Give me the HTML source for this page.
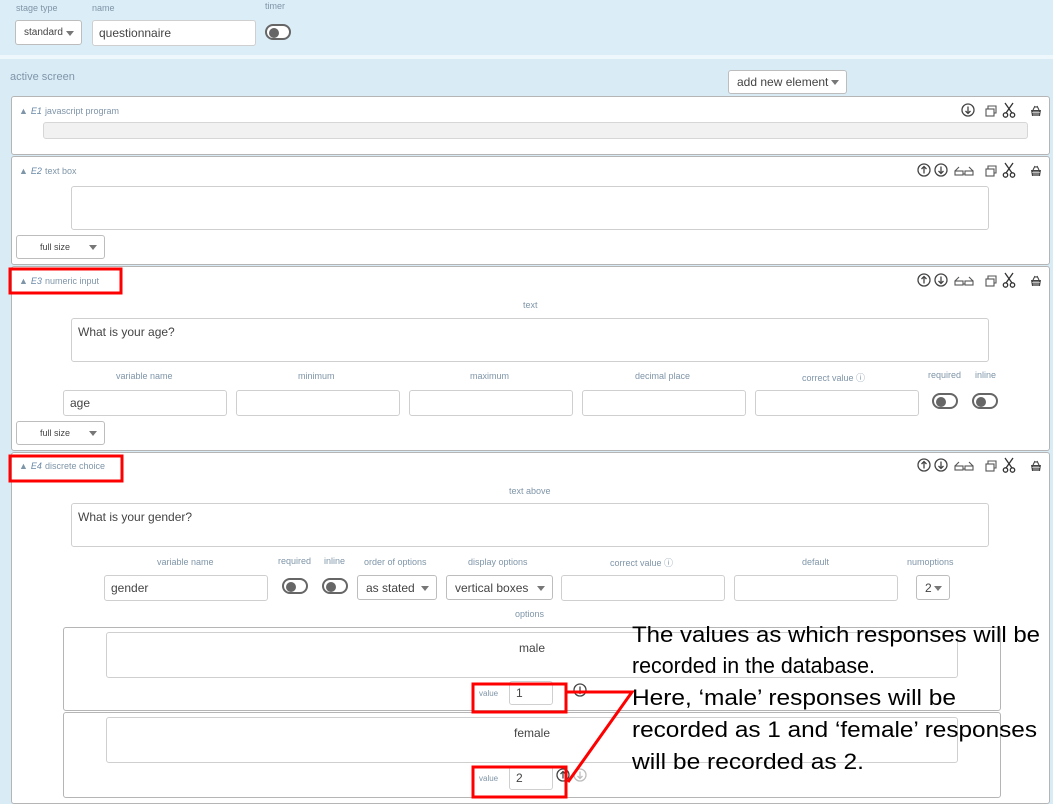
<!DOCTYPE html>
<html><head><meta charset="utf-8">
<style>
*{box-sizing:border-box;margin:0;padding:0}
body{width:1053px;height:802px;overflow:hidden;background:#d9ecf6;font-family:"Liberation Sans",sans-serif;position:relative}
.a{position:absolute}
.lbl{position:absolute;font-size:9px;color:#7f95a8;white-space:nowrap}
.panel{position:absolute;left:11px;width:1039px;background:#fff;border:1px solid #b5b5b5;border-radius:3px}
.inp{position:absolute;background:#fff;border:1px solid #cfcfcf;border-radius:3px;font-size:12px;color:#444;padding:0 6px;display:flex;align-items:center}
.ta{position:absolute;background:#fff;border:1px solid #cfcfcf;border-radius:3px;font-size:12px;color:#444;padding:6px}
.sel{position:absolute;background:#fff;border:1px solid #bdbdbd;border-radius:3px;font-size:12px;color:#444;display:flex;align-items:center;padding-left:8px}
.sel:after{content:"";position:absolute;right:7px;top:50%;margin-top:-2px;border-left:4px solid transparent;border-right:4px solid transparent;border-top:5px solid #777}
.tog{position:absolute;width:26px;height:16px;border:2px solid #666;border-radius:8px;background:#fff}
.tog:after{content:"";position:absolute;left:2px;top:1.5px;width:10px;height:10px;border-radius:50%;background:#666}
.head{position:absolute;font-size:9px;color:#7f95a8;white-space:nowrap}
.head i{color:#6a89a8;margin:0 3px 0 3px}
</style></head><body>
<div class="a" style="left:0;top:0;width:1053px;height:55px;background:#dbedf6"></div>
<div class="a" style="left:0;top:55px;width:1053px;height:4px;background:#eef7fb"></div>
<div class="lbl" style="left:16px;top:3px">stage type</div>
<div class="lbl" style="left:92px;top:3px">name</div>
<div class="lbl" style="left:265px;top:1px">timer</div>
<div class="sel" style="left:15px;top:20px;width:67px;height:25px;font-size:10px;padding-left:8px">standard</div>
<div class="inp" style="left:92px;top:20px;width:164px;height:26px;font-size:12px">questionnaire</div>
<div class="tog" style="left:265px;top:24px"></div>
<div class="lbl" style="left:10px;top:71px;font-size:11px;color:#7f95a8">active screen</div>
<div class="sel" style="left:728px;top:70px;width:119px;height:24px;font-size:12px">add new element</div>

<div class="panel" style="top:96px;height:59px"></div>
<div class="head" style="left:19px;top:106px">&#9650;<i>E1</i>javascript program</div>
<div class="a" style="left:43px;top:122px;width:985px;height:17px;background:#f1f1f1;border:1px solid #d6d6d6;border-radius:3px"></div>

<div class="panel" style="top:156px;height:109px"></div>
<div class="head" style="left:19px;top:166px">&#9650;<i>E2</i>text box</div>
<div class="ta" style="left:71px;top:186px;width:918px;height:44px"></div>
<div class="sel" style="left:16px;top:235px;width:89px;height:24px;font-size:9px;padding-left:23px">full size</div>

<div class="panel" style="top:266px;height:185px"></div>
<div class="head" style="left:19px;top:276px">&#9650;<i>E3</i>numeric input</div>
<div class="lbl" style="left:523px;top:300px">text</div>
<div class="ta" style="left:71px;top:318px;width:918px;height:44px">What is your age?</div>
<div class="lbl" style="left:116px;top:371px">variable name</div>
<div class="lbl" style="left:298px;top:371px">minimum</div>
<div class="lbl" style="left:470px;top:371px">maximum</div>
<div class="lbl" style="left:635px;top:371px">decimal place</div>
<div class="lbl" style="left:802px;top:371px">correct value &#9432;</div>
<div class="lbl" style="left:928px;top:370px">required</div>
<div class="lbl" style="left:975px;top:370px">inline</div>
<div class="inp" style="left:63px;top:390px;width:164px;height:26px">age</div>
<div class="inp" style="left:236px;top:390px;width:164px;height:26px"></div>
<div class="inp" style="left:409px;top:390px;width:164px;height:26px"></div>
<div class="inp" style="left:582px;top:390px;width:164px;height:26px"></div>
<div class="inp" style="left:755px;top:390px;width:164px;height:26px"></div>
<div class="tog" style="left:932px;top:393px"></div>
<div class="tog" style="left:972px;top:393px"></div>
<div class="sel" style="left:16px;top:421px;width:89px;height:24px;font-size:9px;padding-left:23px">full size</div>

<div class="panel" style="top:452px;height:352px"></div>
<div class="head" style="left:19px;top:461px">&#9650;<i>E4</i>discrete choice</div>
<div class="lbl" style="left:509px;top:486px">text above</div>
<div class="ta" style="left:71px;top:503px;width:918px;height:44px">What is your gender?</div>
<div class="lbl" style="left:157px;top:557px">variable name</div>
<div class="lbl" style="left:278px;top:556px">required</div>
<div class="lbl" style="left:324px;top:556px">inline</div>
<div class="lbl" style="left:364px;top:557px">order of options</div>
<div class="lbl" style="left:468px;top:557px">display options</div>
<div class="lbl" style="left:610px;top:556px">correct value &#9432;</div>
<div class="lbl" style="left:802px;top:557px">default</div>
<div class="lbl" style="left:907px;top:557px">numoptions</div>
<div class="inp" style="left:104px;top:575px;width:164px;height:26px">gender</div>
<div class="tog" style="left:282px;top:578px"></div>
<div class="tog" style="left:322px;top:578px"></div>
<div class="sel" style="left:357px;top:575px;width:80px;height:25px">as stated</div>
<div class="sel" style="left:446px;top:575px;width:107px;height:25px">vertical boxes</div>
<div class="inp" style="left:561px;top:575px;width:164px;height:26px"></div>
<div class="inp" style="left:734px;top:575px;width:164px;height:26px"></div>
<div class="sel" style="left:916px;top:575px;width:34px;height:25px">2</div>
<div class="lbl" style="left:515px;top:609px">options</div>

<div class="a" style="left:63px;top:627px;width:938px;height:84px;border:1px solid #b5b5b5;border-radius:3px"></div>
<div class="ta" style="left:106px;top:632px;width:852px;height:46px;text-align:center;padding-top:8px">male</div>
<div class="lbl" style="left:479px;top:689px;font-size:8px">value</div>
<div class="inp" style="left:509px;top:681px;width:44px;height:24px">1</div>
<div class="a" style="left:63px;top:712px;width:938px;height:86px;border:1px solid #b5b5b5;border-radius:3px"></div>
<div class="ta" style="left:106px;top:717px;width:852px;height:46px;text-align:center;padding-top:8px">female</div>
<div class="lbl" style="left:479px;top:774px;font-size:8px">value</div>
<div class="inp" style="left:509px;top:766px;width:44px;height:24px">2</div>

<svg class="a" style="left:0;top:0" width="1053" height="802">
<defs>
<g id="up"><circle cx="0" cy="0" r="6" fill="none" stroke="#444" stroke-width="1.3"/><path d="M0 3.5V-3.5M-2.5 -1L0 -3.5L2.5 -1" fill="none" stroke="#444" stroke-width="1.3"/></g>
<g id="dn"><circle cx="0" cy="0" r="6" fill="none" stroke="#444" stroke-width="1.3"/><path d="M0 -3.5V3.5M-2.5 1L0 3.5L2.5 1" fill="none" stroke="#444" stroke-width="1.3"/></g>
<g id="gl" fill="none" stroke="#555" stroke-width="1.1"><path d="M-1 3H1M-9 0L-5 -4M9 0L5 -4"/><rect x="-9" y="0" width="8" height="4"/><rect x="1" y="0" width="8" height="4"/></g>
<g id="cp" fill="none" stroke="#555" stroke-width="1.1"><rect x="-5" y="-2" width="8" height="7"/><path d="M-3 -2V-5H5V2H3"/></g>
<g id="sc" fill="none" stroke="#333" stroke-width="1.3"><path d="M-4 -7L3 3M4 -7L-3 3"/><circle cx="-3.5" cy="5" r="2.2"/><circle cx="3.5" cy="5" r="2.2"/></g>
<g id="bk"><path d="M-5 -1H5L4 5H-4Z" fill="#444"/><path d="M-3 -1L-1 -5M3 -1L1 -5M-2 -4H2" stroke="#444" stroke-width="1.1" fill="none"/><path d="M-4 1.5H4M-2 0V5M0 0V5M2 0V5" stroke="#fff" stroke-width="0.6"/></g>
</defs>
<use href="#dn" x="968" y="110"/><use href="#cp" x="991" y="111"/><use href="#sc" x="1009" y="110"/><use href="#bk" x="1036" y="111"/>
<g><use href="#up" x="924" y="170"/><use href="#dn" x="941" y="170"/><use href="#gl" x="964" y="171"/><use href="#cp" x="991" y="171"/><use href="#sc" x="1009" y="170"/><use href="#bk" x="1036" y="171"/></g>
<g><use href="#up" x="924" y="280"/><use href="#dn" x="941" y="280"/><use href="#gl" x="964" y="281"/><use href="#cp" x="991" y="281"/><use href="#sc" x="1009" y="280"/><use href="#bk" x="1036" y="281"/></g>
<g><use href="#up" x="924" y="465"/><use href="#dn" x="941" y="465"/><use href="#gl" x="964" y="466"/><use href="#cp" x="991" y="466"/><use href="#sc" x="1009" y="465"/><use href="#bk" x="1036" y="466"/></g>
<use href="#dn" x="580" y="690"/>
<use href="#up" x="563" y="775"/>
<g opacity="0.35"><use href="#dn" x="580" y="775"/></g>
<rect x="10" y="269" width="111" height="24" fill="none" stroke="#f00" stroke-width="3"/>
<rect x="10" y="456" width="112" height="25" fill="none" stroke="#f00" stroke-width="3"/>
<rect x="473" y="684" width="93" height="28" fill="none" stroke="#f00" stroke-width="3"/>
<rect x="473" y="767" width="93" height="30" fill="none" stroke="#f00" stroke-width="3"/>
<path d="M566 692H632L568 782" fill="none" stroke="#f00" stroke-width="3"/>
<g font-family="'Liberation Sans',sans-serif" font-size="22" fill="#000">
<text x="632" y="642" textLength="408" lengthAdjust="spacingAndGlyphs">The values as which responses will be</text>
<text x="632" y="673" textLength="243" lengthAdjust="spacingAndGlyphs">recorded in the database.</text>
<text x="632" y="705" textLength="324" lengthAdjust="spacingAndGlyphs">Here, ‘male’ responses will be</text>
<text x="632" y="737" textLength="405" lengthAdjust="spacingAndGlyphs">recorded as 1 and ‘female’ responses</text>
<text x="632" y="769" textLength="232" lengthAdjust="spacingAndGlyphs">will be recorded as 2.</text>
</g>
</svg>
</body></html>
